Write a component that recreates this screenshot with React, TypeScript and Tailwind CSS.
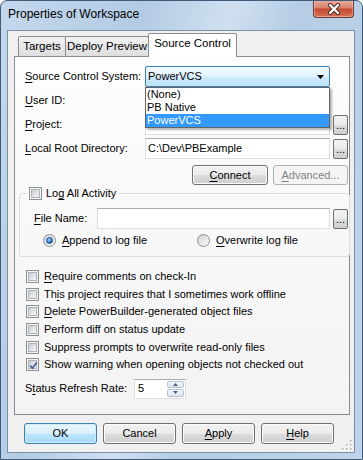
import React from "react";

function Mn({ children }: { children: React.ReactNode }) {
  return <span className="underline decoration-1 underline-offset-[2px]">{children}</span>;
}

function CheckBox({ checked = false }: { checked?: boolean }) {
  return (
    <span className="relative flex h-[13px] w-[13px] shrink-0 border border-[#8e8f8f] bg-[#f4f4f4] p-px">
      <span className="flex-1 border border-[#aeb3b9] bg-gradient-to-br from-[#c9cdd3] to-[#f7f7f7]" />
      {checked && (
        <svg className="absolute left-px top-px" width="11" height="11" viewBox="0 0 11 11">
          <path d="M2.2 5.6 L4.4 8.2 L8.8 2.4" fill="none" stroke="#4a5f97" strokeWidth="1.7" />
        </svg>
      )}
    </span>
  );
}

function Radio({ checked = false }: { checked?: boolean }) {
  return (
    <span className="flex h-[13px] w-[13px] shrink-0 items-center justify-center rounded-full border border-[#8e8f8f] bg-gradient-to-br from-[#cfd2d7] to-[#fafafa]">
      {checked && (
        <span className="h-[7px] w-[7px] rounded-full border border-[#1d4f86] bg-[radial-gradient(circle_at_40%_35%,#b4dcfa,#2b7fcf_55%,#0e3f78)]" />
      )}
    </span>
  );
}

function Btn({
  children,
  w,
  def = false,
  disabled = false,
}: {
  children: React.ReactNode;
  w: string;
  def?: boolean;
  disabled?: boolean;
}) {
  const look = disabled
    ? "border-[#adb2b5] bg-[#f4f4f4] text-[#838383]"
    : def
    ? "border-[#3c7fb1] bg-[linear-gradient(#eaf6fd_0%,#d9f0fc_50%,#bee6fd_50%,#a7d9f5_100%)] shadow-[inset_0_0_0_1px_#cfeefc]"
    : "border-[#707070] bg-[linear-gradient(#f2f2f2_0%,#ebebeb_50%,#dddddd_50%,#cfcfcf_100%)] shadow-[inset_0_0_0_1px_#fcfcfc]";
  return (
    <div className={`flex h-full shrink-0 items-center justify-center rounded-[3px] border ${look} ${w}`}>
      {children}
    </div>
  );
}

function Browse() {
  return (
    <div className="ml-[3px] flex h-[20px] w-[15px] shrink-0 items-end justify-center rounded-[2px] border border-[#707070] bg-[linear-gradient(#f2f2f2_0%,#ebebeb_50%,#dddddd_50%,#cfcfcf_100%)] pb-[3px] text-[11px] leading-none">
      ...
    </div>
  );
}

function TextBox({ w, value = "" }: { w: string; value?: string }) {
  return (
    <div
      className={`flex h-[21px] shrink-0 items-center border border-[#dbdfe6] border-t-[#abadb3] bg-white pl-[2px] ${w}`}
    >
      {value}
    </div>
  );
}

function Row({
  label,
  value,
  browse = true,
}: {
  label: React.ReactNode;
  value?: string;
  browse?: boolean;
}) {
  return (
    <div className="mt-[3px] flex h-[21px] items-center">
      <span className="w-[120px] shrink-0">{label}</span>
      <TextBox w="w-[185px]" value={value} />
      {browse && <Browse />}
    </div>
  );
}

function CloseButton() {
  return (
    <div className="ml-auto mr-[8px] -mt-px flex h-[18px] w-[41px] items-center justify-center rounded-b-[4px] border border-t-0 border-[#6b3b33] bg-[linear-gradient(#eab0a2_0%,#d9826d_45%,#c34a31_55%,#d5735a_100%)] shadow-[inset_0_0_0_1px_rgba(255,220,210,0.45)]">
      <svg width="14" height="12" viewBox="0 0 14 12">
        <path d="M3 2 L11 10 M11 2 L3 10" stroke="#4b2520" strokeWidth="4.2" strokeLinecap="round" />
        <path d="M3 2 L11 10 M11 2 L3 10" stroke="#ffffff" strokeWidth="2.4" strokeLinecap="round" />
      </svg>
    </div>
  );
}

const options = ["(None)", "PB Native", "PowerVCS"];

const flags = [
  { label: <><Mn>R</Mn>equire comments on check-In</>, checked: false },
  { label: <>Th<Mn>i</Mn>s project requires that I sometimes work offline</>, checked: false },
  { label: <><Mn>D</Mn>elete PowerBuilder-generated object files</>, checked: false },
  { label: <>Perform diff on status update</>, checked: false },
  { label: <>Suppress prompts to overwrite read-only files</>, checked: false },
  { label: <>Show warning when opening objects not checked out</>, checked: true },
];

const tabIdle =
  "mb-px flex h-[20px] items-start justify-center whitespace-nowrap rounded-t-[2px] border border-b-0 border-[#898c95] bg-[linear-gradient(#f3f3f3,#dedede)] pt-[2px]";

export default function App() {
  return (
    <div className="relative flex h-[460px] w-[363px] flex-col overflow-hidden rounded-t-[7px] border border-[#3f5b7b] bg-[linear-gradient(105deg,#c4d8ed_0%,#b3cbe4_30%,#d0e0f1_48%,#b6cde5_62%,#bfd4ea_100%)] font-['Liberation_Sans',Arial,sans-serif] text-[11px] leading-[13px] text-black">
      {/* title bar */}
      <div className="flex h-[29px] shrink-0 items-start">
        <span className="whitespace-nowrap pl-[7px] pt-[5px] text-[12px] leading-[16px]">
          Properties of Workspace
        </span>
        <CloseButton />
      </div>

      {/* client area */}
      <div className="relative ml-[6px] h-[423px] w-[348px] border border-[#7b8fa6] bg-[#f0f0f0]">
        <div className="ml-[6px] mt-[2px] w-[336px]">
          {/* tabs */}
          <div className="relative z-10 -mb-px flex h-[24px] items-end pl-[4px] text-[11.5px] leading-[15px]">
            <div className={`${tabIdle} w-[48px]`}>Targets</div>
            <div className={`${tabIdle} -ml-px w-[84px]`}>Deploy Preview</div>
            <div className="-ml-px flex h-[24px] w-[89px] items-start justify-center whitespace-nowrap rounded-t-[2px] border border-b-0 border-[#898c95] bg-white pt-[2px]">
              Source Control
            </div>
          </div>

          {/* tab panel */}
          <div className="h-[359px] border border-[#898c95] bg-[linear-gradient(#fdfdfd,#f3f3f3)]">
            <div className="flex flex-col pl-[10px] pt-[9px]">
              <div className="flex h-[21px] items-center">
                <span className="w-[120px] shrink-0">
                  <Mn>S</Mn>ource Control System:
                </span>
                <div className="relative h-[21px] w-[185px]">
                  <div className="flex h-full items-center rounded-[2px] border border-[#3c7fb1] bg-[linear-gradient(#f1f9fe_0%,#e2f3fd_50%,#cdebfc_50%,#bfe3f8_100%)] pl-[2px]">
                    <span>PowerVCS</span>
                    <svg className="ml-auto mr-[5px]" width="7" height="4" viewBox="0 0 7 4">
                      <path d="M0 0 H7 L3.5 4 Z" fill="#000" />
                    </svg>
                  </div>
                  <div className="absolute left-0 top-[21px] z-20 w-[185px] border border-[#646464] bg-white shadow-[2px_2px_2px_rgba(0,0,0,0.3)]">
                    {options.map((o) => (
                      <div
                        key={o}
                        className={`h-[13px] pl-px leading-[13px] ${
                          o === "PowerVCS" ? "bg-[#3399ff] text-white" : ""
                        }`}
                      >
                        {o}
                      </div>
                    ))}
                  </div>
                </div>
              </div>
              <Row label={<><Mn>U</Mn>ser ID:</>} browse={false} />
              <Row label={<><Mn>P</Mn>roject:</>} />
              <Row label={<><Mn>L</Mn>ocal Root Directory:</>} value="C:\Dev\PBExample" />

              <div className="mt-[6px] flex h-[20px] justify-end gap-[5px] pr-px">
                <Btn w="w-[76px]">
                  <span>
                    <Mn>C</Mn>onnect
                  </span>
                </Btn>
                <Btn w="w-[75px]" disabled>
                  <span>
                    <Mn>A</Mn>dvanced...
                  </span>
                </Btn>
              </div>

              {/* log group */}
              <div className="relative -ml-[6px] mt-[8px] h-[64px] w-[331px] rounded-[3px] border border-[#d5dfe5]">
                <div className="absolute -top-[7px] left-[7px] flex items-center gap-[4px] bg-[#f9f9f9] pl-[2px] pr-[3px]">
                  <CheckBox />
                  <span>
                    Lo<Mn>g</Mn> All Activity
                  </span>
                </div>
                <div className="flex flex-col pl-[14px] pt-[14px]">
                  <div className="flex h-[21px] items-center">
                    <span className="w-[63px] shrink-0">
                      <Mn>F</Mn>ile Name:
                    </span>
                    <TextBox w="w-[233px]" />
                    <Browse />
                  </div>
                  <div className="mt-[4px] flex h-[14px] items-center pl-[9px]">
                    <div className="flex w-[154px] items-center gap-[6px]">
                      <Radio checked />
                      <span>
                        <Mn>A</Mn>ppend to log file
                      </span>
                    </div>
                    <div className="flex items-center gap-[6px]">
                      <Radio />
                      <span>
                        <Mn>O</Mn>verwrite log file
                      </span>
                    </div>
                  </div>
                </div>
              </div>

              {/* options */}
              <div className="mt-[11px] flex flex-col">
                {flags.map((f, i) => (
                  <div key={i} className="flex h-[17.6px] items-center gap-[5px] pl-px">
                    <CheckBox checked={f.checked} />
                    <span>{f.label}</span>
                  </div>
                ))}
              </div>

              <div className="mt-[5px] flex h-[20px] items-center">
                <span className="w-[109px] shrink-0">
                  S<Mn>t</Mn>atus Refresh Rate:
                </span>
                <div className="flex h-[20px] w-[52px] items-center border border-[#dbdfe6] border-t-[#abadb3] bg-white pl-[3px]">
                  <span>5</span>
                  <div className="ml-auto mr-px flex h-[16px] w-[17px] flex-col gap-px">
                    <div className="flex flex-1 items-center justify-center rounded-[2px] border border-[#b7c3d2] bg-[linear-gradient(#f4f7fb,#dde5ee)]">
                      <svg width="5" height="3" viewBox="0 0 5 3">
                        <path d="M0 3 H5 L2.5 0 Z" fill="#4d6185" />
                      </svg>
                    </div>
                    <div className="flex flex-1 items-center justify-center rounded-[2px] border border-[#b7c3d2] bg-[linear-gradient(#f4f7fb,#dde5ee)]">
                      <svg width="5" height="3" viewBox="0 0 5 3">
                        <path d="M0 0 H5 L2.5 3 Z" fill="#4d6185" />
                      </svg>
                    </div>
                  </div>
                </div>
              </div>
            </div>
          </div>
        </div>

        {/* dialog buttons */}
        <div className="ml-[16px] mt-[8px] flex h-[21px] gap-[6px]">
          <Btn w="w-[73px]" def>
            OK
          </Btn>
          <Btn w="w-[73px]">Cancel</Btn>
          <Btn w="w-[73px]">
            <span>
              <Mn>A</Mn>pply
            </span>
          </Btn>
          <Btn w="w-[73px]">
            <span>
              <Mn>H</Mn>elp
            </span>
          </Btn>
        </div>

        {/* size grip */}
        <svg className="absolute bottom-[2px] right-[2px]" width="10" height="10" viewBox="0 0 10 10">
          {[
            [8, 0],
            [8, 4],
            [4, 4],
            [8, 8],
            [4, 8],
            [0, 8],
          ].map(([x, y], i) => (
            <g key={i}>
              <rect x={x + 1} y={y + 1} width="1.5" height="1.5" fill="#ffffff" />
              <rect x={x} y={y} width="1.5" height="1.5" fill="#a7a7a7" />
            </g>
          ))}
        </svg>
      </div>
    </div>
  );
}
